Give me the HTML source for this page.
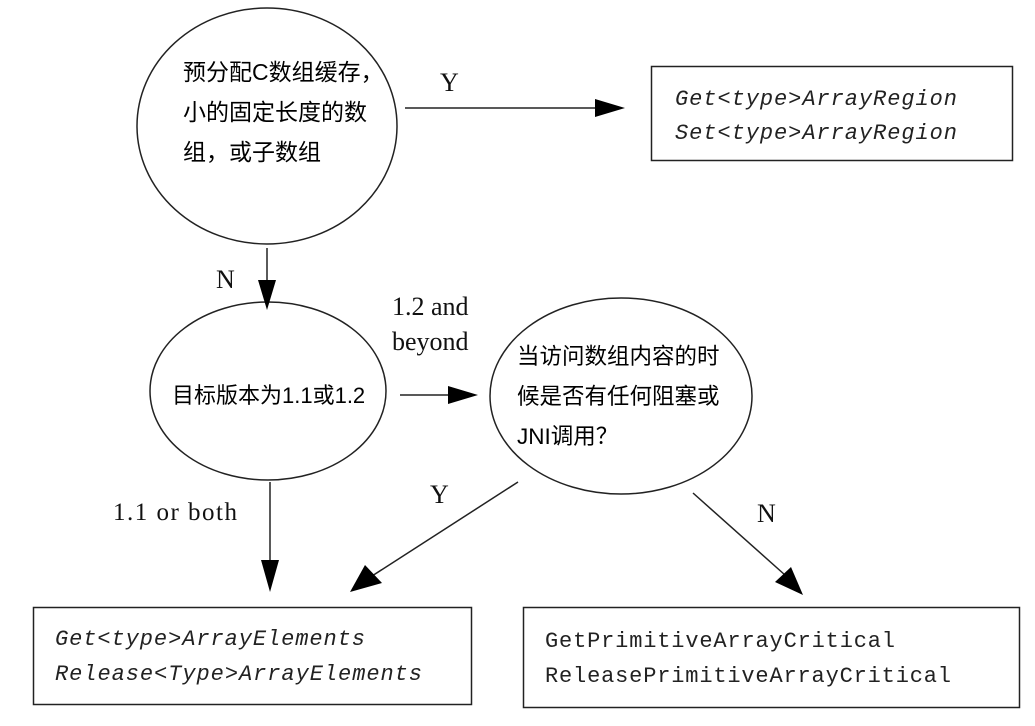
<!DOCTYPE html>
<html><head><meta charset="utf-8"><style>
html,body{margin:0;padding:0;background:#fff;}
svg{display:block}
.cjk{font-family:"Liberation Sans","Noto Sans CJK SC",sans-serif;fill:#000}
.ser{font-family:"Liberation Serif",serif;fill:#111}
.mono{font-family:"Liberation Mono","DejaVu Sans Mono",monospace;fill:#222}
</style></head><body>
<svg width="1035" height="726" viewBox="0 0 1035 726" xmlns="http://www.w3.org/2000/svg">
<g fill="none" stroke="#222" stroke-width="1.5">
<ellipse cx="267" cy="126" rx="130" ry="118"/>
<ellipse cx="268" cy="391" rx="118" ry="89"/>
<ellipse cx="621" cy="396" rx="131" ry="98"/>
<rect x="651.5" y="66.5" width="361" height="94"/>
<rect x="33.5" y="607.5" width="438" height="97"/>
<rect x="523.5" y="607.5" width="496" height="100"/>
<line x1="405" y1="108" x2="600" y2="108"/>
<line x1="267" y1="248" x2="267" y2="285"/>
<line x1="400" y1="395" x2="455" y2="395"/>
<line x1="270" y1="482" x2="270" y2="565"/>
<line x1="518" y1="482" x2="372" y2="576"/>
<line x1="693" y1="493" x2="785" y2="575"/>
</g>
<g fill="#000">
<polygon points="595,99 625,108 595,117"/>
<polygon points="258,280 276,280 267,310"/>
<polygon points="448,386 478,395 448,404"/>
<polygon points="261,560 279,560 270,592"/>
<polygon points="365,565 382,583 350,592"/>
<polygon points="775,582 791,567 803,595"/>
</g>
<text class="cjk" font-size="23" x="183" y="80">预分配C数组缓存，</text>
<text class="cjk" font-size="23" x="183" y="120">小的固定长度的数</text>
<text class="cjk" font-size="23" x="183" y="160">组，或子数组</text>
<text class="cjk" font-size="22" x="172" y="403">目标版本为1.1或1.2</text>
<text class="cjk" font-size="22.5" x="517" y="364">当访问数组内容的时</text>
<text class="cjk" font-size="22.5" x="517" y="404">候是否有任何阻塞或</text>
<text class="cjk" font-size="22.5" x="517" y="444">JNI调用？</text>
<text class="ser" font-size="26" x="440" y="91">Y</text>
<text class="ser" font-size="26" x="216" y="288">N</text>
<text class="ser" font-size="26" x="392" y="315">1.2 and</text>
<text class="ser" font-size="26" x="392" y="350">beyond</text>
<text class="ser" font-size="25" x="113" y="520" textLength="124">1.1 or both</text>
<text class="ser" font-size="26" x="430" y="503">Y</text>
<text class="ser" font-size="26" x="757" y="522">N</text>
<text class="mono" font-size="22" font-style="italic" x="675" y="105" textLength="282">Get&lt;type&gt;ArrayRegion</text>
<text class="mono" font-size="22" font-style="italic" x="675" y="139" textLength="282">Set&lt;type&gt;ArrayRegion</text>
<text class="mono" font-size="22" font-style="italic" x="55" y="645" textLength="310">Get&lt;type&gt;ArrayElements</text>
<text class="mono" font-size="22" font-style="italic" x="55" y="680" textLength="367">Release&lt;Type&gt;ArrayElements</text>
<text class="mono" font-size="22" x="545" y="647" textLength="350">GetPrimitiveArrayCritical</text>
<text class="mono" font-size="22" x="545" y="682" textLength="406">ReleasePrimitiveArrayCritical</text>
</svg>
</body></html>
